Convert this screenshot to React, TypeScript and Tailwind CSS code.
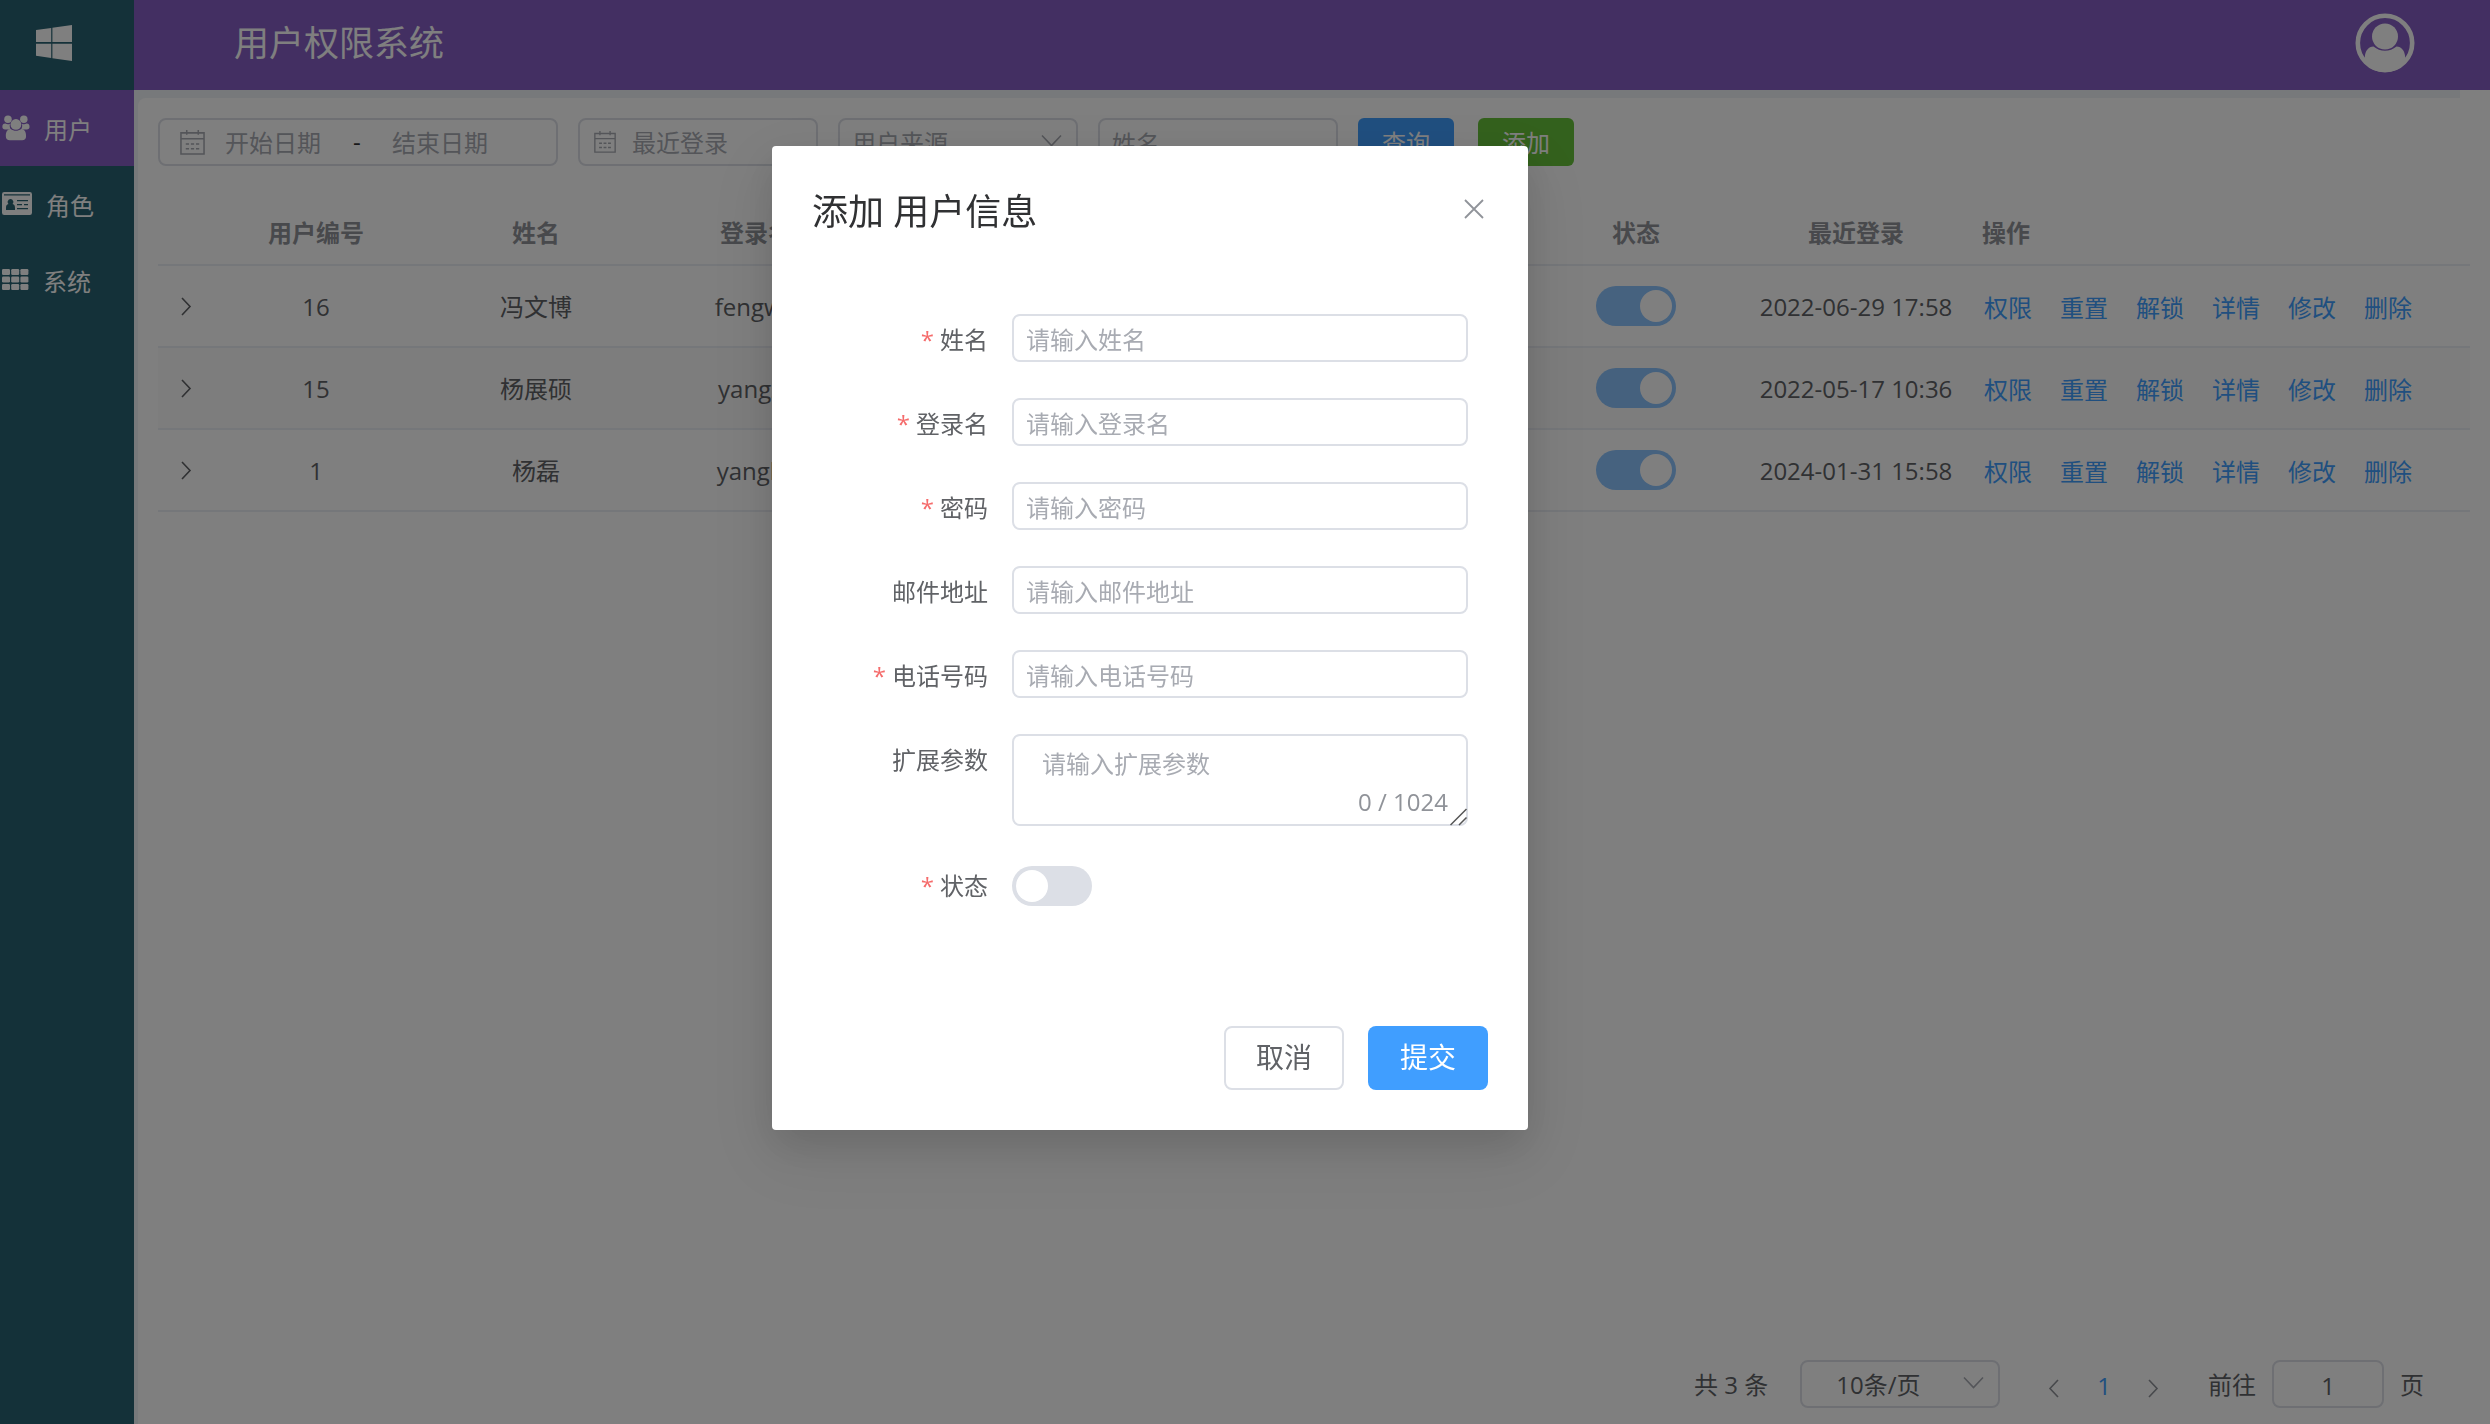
import { useState } from "react";

interface User {
  id: number;
  name: string;
  login: string;
  lastLogin: string;
}

const users: User[] = [
  { id: 16, name: "冯文博", login: "fengwb", lastLogin: "2022-06-29 17:58" },
  { id: 15, name: "杨展硕", login: "yangzs", lastLogin: "2022-05-17 10:36" },
  { id: 1, name: "杨磊", login: "yanglei", lastLogin: "2024-01-31 15:58" },
];

const actions = ["权限", "重置", "解锁", "详情", "修改", "删除"];

const fields = [
  { id: "name", label: "姓名", required: true, type: "text" },
  { id: "login", label: "登录名", required: true, type: "text" },
  { id: "password", label: "密码", required: true, type: "password" },
  { id: "email", label: "邮件地址", required: false, type: "text" },
  { id: "phone", label: "电话号码", required: true, type: "text" },
];

const switchClass =
  "flex h-10 w-20 shrink-0 appearance-none items-center rounded-full bg-[#dcdfe6] px-1 before:block before:size-8 before:rounded-full before:bg-white checked:justify-end checked:bg-[#409eff]";

const boxClass = "h-12 rounded-lg border-2 border-[#dcdfe6] bg-white";

/* ---------- icons ---------- */

function WindowsIcon() {
  return (
    <svg width="36" height="36" viewBox="0 0 36 36" fill="currentColor">
      <path d="M0 5.1 15.2 3v14.1H0zM16.4 2.8 36 0v17.1H16.4zM0 18.7h15.2v14.2L0 30.8zM16.4 18.7H36V36l-19.6-2.8z" />
    </svg>
  );
}

function UsersIcon() {
  return (
    <svg width="28" height="28" viewBox="0 0 30 28" fill="currentColor">
      <circle cx="6.4" cy="4.6" r="4" />
      <circle cx="23.4" cy="4.6" r="4" />
      <circle cx="14.9" cy="10.2" r="5.8" />
      <path d="M3.6 9.3c1.700 1 3.600 1 5 .1-.7 2.200-.3 4.400 1 6.100H3.300c-1.800 0-2.900-1-2.900-2.700 0-1.700.6-3.500 3.200-3.500zM26.300 9.300c-1.700 1-3.600 1-5 .1.7 2.200.3 4.400-1 6.100h6.300c1.800 0 2.900-1 2.900-2.700 0-1.700-.6-3.500-3.200-3.500z" />
      <path d="M9.300 15.200c3.300 2.500 7.900 2.500 11.200 0 3.700 0 5.300 3.200 5.300 7.600 0 2.700-1.600 4.300-4.300 4.300H8.400c-2.700 0-4.300-1.600-4.300-4.300 0-4.400 1.600-7.600 5.200-7.600z" />
    </svg>
  );
}

function CardIcon() {
  return (
    <svg width="30" height="24" viewBox="0 0 30 24" fill="currentColor">
      <path
        fillRule="evenodd"
        d="M2.200 0h25.600A2.200 2.200 0 0 1 30 2.200v18.600a2.200 2.200 0 0 1-2.200 2.200H2.200A2.200 2.200 0 0 1 0 20.800V2.200A2.200 2.200 0 0 1 2.200 0zM2 2.300v1.300h26V2.300zM8.500 7a3 3 0 0 0-2 5.100C4.600 12.500 4 14 4 16v2h9v-2c0-2-.6-3.500-2.500-3.900A3 3 0 0 0 8.500 7zM15 8v1.200h11V8zm0 4v1.200h5V12zm7 0v1.200h4V12zm-7 4v1.200h11V16z"
      />
    </svg>
  );
}

function GridIcon() {
  return (
    <svg width="27" height="22" viewBox="0 0 27 22" fill="currentColor">
      {[0, 7.5, 15].map((y) =>
        [0, 9.2, 18.4].map((x) => <rect key={`${x}-${y}`} x={x} y={y} width="8" height="6" rx="1.2" />)
      )}
    </svg>
  );
}

function AvatarIcon() {
  return (
    <svg width="60" height="60" viewBox="0 0 60 60">
      <circle cx="30" cy="30" r="27.200" fill="none" stroke="currentColor" strokeWidth="4.600" />
      <circle cx="30" cy="23.500" r="13" fill="currentColor" />
      <path
        fill="currentColor"
        d="M18.500 33.500c6.500 5.700 16.500 5.700 23 0 5.200.3 8 4 8.700 10.200l.8 5C45.500 56 38.500 59 30 59S14.500 56 9 48.700l.8-5c.7-6.200 3.500-9.900 8.700-10.200z"
      />
    </svg>
  );
}

function CalendarIcon({ size }: { size: number }) {
  return (
    <svg width={size} height={size} viewBox="0 0 26 26" fill="none" stroke="#a8abb2" strokeWidth="1.600" className="shrink-0">
      <path d="M1 3h24v22H1zM1 9h24M7 0v5M19 0v5" />
      <path d="M6 14.500h14M6 19.500h14" strokeDasharray="3.400 1.900" />
    </svg>
  );
}

function Chevron({ dir }: { dir: "left" | "right" | "down" }) {
  const paths = {
    left: "M14 2 6 10.500l8 8.500",
    right: "M6 2l8 8.500L6 19",
    down: "M1 5.500l9.500 10 9.500-10",
  };
  return (
    <svg width="21" height="21" viewBox="0 0 21 21" fill="none" stroke="currentColor" strokeWidth="1.600">
      <path d={paths[dir]} />
    </svg>
  );
}

/* ---------- page parts ---------- */

function Sidebar() {
  const items = [
    { label: "用户", icon: <UsersIcon />, className: "gap-3.5 bg-[#865ec4]" },
    { label: "角色", icon: <CardIcon />, className: "gap-3.5" },
    { label: "系统", icon: <GridIcon />, className: "gap-3.5" },
  ];
  return (
    <aside className="w-[134px] shrink-0 bg-[#286272] text-white">
      <div className="flex h-[90px] items-center pl-9 pb-1">
        <WindowsIcon />
      </div>
      <nav>
        {items.map((item) => (
          <a key={item.label} href="#" className={`flex h-[76px] items-center pl-0.5 ${item.className}`}>
            {item.icon}
            <span className="pt-1">{item.label}</span>
          </a>
        ))}
      </nav>
    </aside>
  );
}

function Toolbar() {
  return (
    <div className="flex items-center gap-5">
      <div className={`${boxClass} flex w-[400px] items-center pl-5`}>
        <CalendarIcon size={25} />
        <input aria-label="开始日期" placeholder="开始日期" className="ml-5 w-[128px] pt-0.5 placeholder:text-[#a8abb2]" />
        <span className="w-[39px] text-[#303133]">-</span>
        <input aria-label="结束日期" placeholder="结束日期" className="w-[140px] pt-0.5 placeholder:text-[#a8abb2]" />
      </div>
      <div className={`${boxClass} flex w-[240px] items-center gap-4 pl-3.5`}>
        <CalendarIcon size={22} />
        <input aria-label="最近登录" placeholder="最近登录" className="w-[160px] pt-0.5 placeholder:text-[#a8abb2]" />
      </div>
      <div className="relative">
        <select aria-label="用户来源" className={`${boxClass} w-[240px] appearance-none pt-0.5 pl-3 text-[#a8abb2]`}>
          <option>用户来源</option>
        </select>
        <span className="pointer-events-none absolute top-3 right-4 text-[#a8abb2]">
          <Chevron dir="down" />
        </span>
      </div>
      <input aria-label="姓名" placeholder="姓名" className={`${boxClass} w-[240px] px-3 pt-0.5 placeholder:text-[#a8abb2]`} />
      <div className="flex gap-6">
        <button className="h-12 w-24 rounded-md bg-[#409eff] pt-0.5 text-white">查询</button>
        <button className="h-12 w-24 rounded-md bg-[#67c23a] pt-0.5 text-white">添加</button>
      </div>
    </div>
  );
}

function UserTable() {
  return (
    <table className="mt-[35px] w-full table-fixed border-collapse text-center text-[#606266]">
      <thead className="text-[#909399]">
        <tr className="h-[64px] border-b-2 border-[#ebeef5]">
          <th className="w-12" />
          <th className="w-[220px] font-bold">用户编号</th>
          <th className="w-[220px] font-bold">姓名</th>
          <th className="w-[220px] font-bold">登录名</th>
          <th className="w-[660px]" />
          <th className="w-[220px] font-bold">状态</th>
          <th className="w-[220px] font-bold">最近登录</th>
          <th className="pl-4 text-left font-bold">操作</th>
        </tr>
      </thead>
      <tbody>
        {users.map((u) => (
          <tr key={u.id} className="h-[82px] border-b-2 border-[#ebeef5] even:bg-[#fafafa]">
            <td className="pl-[18px]">
              <button aria-label="展开" className="flex">
                <Chevron dir="right" />
              </button>
            </td>
            <td className="pt-0.5">{u.id}</td>
            <td className="pt-0.5">{u.name}</td>
            <td className="pt-0.5">{u.login}</td>
            <td />
            <td>
              <input type="checkbox" aria-label="状态" defaultChecked className={`${switchClass} mx-auto opacity-60`} />
            </td>
            <td className="pt-0.5">{u.lastLogin}</td>
            <td className="pt-1 pl-[18px]">
              <div className="flex gap-7 text-[#409eff]">
                {actions.map((a) => (
                  <button key={a}>{a}</button>
                ))}
              </div>
            </td>
          </tr>
        ))}
      </tbody>
    </table>
  );
}

function Pagination() {
  return (
    <div className="mt-auto flex items-center justify-end pr-[46px] text-[#606266]">
      <span className="pt-0.5">共 3 条</span>
      <div className="relative ml-8">
        <select aria-label="每页条数" className={`${boxClass} w-[200px] appearance-none pt-0.5 pl-[34px]`}>
          <option>10条/页</option>
        </select>
        <span className="pointer-events-none absolute top-3 right-4 text-[#a8abb2]">
          <Chevron dir="down" />
        </span>
      </div>
      <div className="ml-11 flex items-center gap-8 pt-1 text-[#909399]">
        <button aria-label="上一页" className="pt-1">
          <Chevron dir="left" />
        </button>
        <button className="text-[#409eff]">1</button>
        <button aria-label="下一页" className="pt-1">
          <Chevron dir="right" />
        </button>
      </div>
      <label className="ml-11 flex items-center gap-4">
        <span className="pt-0.5">前往</span>
        <input defaultValue="1" className={`${boxClass} w-[112px] pt-0.5 text-center`} />
        <span className="pt-0.5">页</span>
      </label>
    </div>
  );
}

function UserDialog() {
  const [note, setNote] = useState("");
  const labelClass = "w-[176px] shrink-0 text-right leading-[52px] text-[#606266]";
  return (
    <div className="fixed inset-0 flex items-start justify-center bg-black/50 pt-[146px] pr-[190px]">
      <div
        role="dialog"
        aria-label="添加 用户信息"
        className="w-[756px] rounded bg-white p-10 shadow-[0_24px_72px_16px_rgba(0,0,0,0.06),0_16px_40px_rgba(0,0,0,0.12)]"
      >
        <div className="flex h-[52px] items-center justify-between pr-1">
          <h2 className="text-4xl text-[#303133]">添加 用户信息</h2>
          <button aria-label="关闭" className="pb-1.5 text-[#909399]">
            <svg width="20" height="20" viewBox="0 0 20 20" stroke="currentColor" strokeWidth="1.800">
              <path d="M1 1l18 18M19 1 1 19" />
            </svg>
          </button>
        </div>

        <form className="mt-[76px] flex flex-col gap-9">
          {fields.map((f) => (
            <div key={f.id} className="flex h-12 gap-6">
              <label htmlFor={f.id} className={labelClass}>
                {f.required && <span className="mr-1.5 text-[#f56c6c]">*</span>}
                {f.label}
              </label>
              <input
                id={f.id}
                type={f.type}
                placeholder={`请输入${f.label}`}
                className={`${boxClass} w-[456px] px-3 pt-0.5 placeholder:text-[#a8abb2]`}
              />
            </div>
          ))}
          <div className="flex gap-6">
            <label htmlFor="note" className={labelClass}>
              扩展参数
            </label>
            <div className="relative flex">
              <textarea
                id="note"
                value={note}
                onChange={(e) => setNote(e.target.value)}
                placeholder="请输入扩展参数"
                className="h-[92px] w-[456px] resize-none rounded-lg border-2 border-[#dcdfe6] px-7 py-2.5 leading-9 placeholder:text-[#a8abb2]"
              />
              <span className="absolute right-5 bottom-2 text-[#909399]">{note.length} / 1024</span>
              <svg width="18" height="18" viewBox="0 0 18 18" stroke="#555" strokeWidth="1.500" className="absolute right-0 bottom-0">
                <path d="M.5 17 16.500 1M9 17l7.500-7.500" />
              </svg>
            </div>
          </div>
          <div className="flex h-12 items-center gap-6">
            <label htmlFor="status" className={labelClass}>
              <span className="mr-1.5 text-[#f56c6c]">*</span>状态
            </label>
            <input id="status" type="checkbox" className={switchClass} />
          </div>
        </form>

        <div className="mt-[116px] flex justify-end gap-6 text-[28px]">
          <button className="h-16 w-[120px] rounded-lg border-2 border-[#dcdfe6] text-[#606266]">取消</button>
          <button className="h-16 w-[120px] rounded-lg bg-[#409eff] text-white">提交</button>
        </div>
      </div>
    </div>
  );
}

export default function App() {
  return (
    <div className="flex min-h-screen bg-white font-['Open_Sans','Noto_Sans_CJK_SC',sans-serif] text-2xl">
      <Sidebar />
      <div className="flex min-w-0 flex-1 flex-col">
        <header className="flex h-[90px] items-center justify-between bg-[#865ec4] pr-[75px] pb-1 pl-[100px] text-white">
          <h1 className="text-[35px]">用户权限系统</h1>
          <button aria-label="个人中心">
            <AvatarIcon />
          </button>
        </header>
        <div className="mr-[30px] h-2 bg-[#eff2f6]" />
        <div className="flex flex-1 bg-[#eff2f6] pl-1">
          <main className="flex min-w-0 flex-1 flex-col rounded-tl-lg bg-white pt-5 pr-5 pb-4 pl-5">
            <Toolbar />
            <UserTable />
            <Pagination />
          </main>
        </div>
      </div>
      <UserDialog />
    </div>
  );
}
